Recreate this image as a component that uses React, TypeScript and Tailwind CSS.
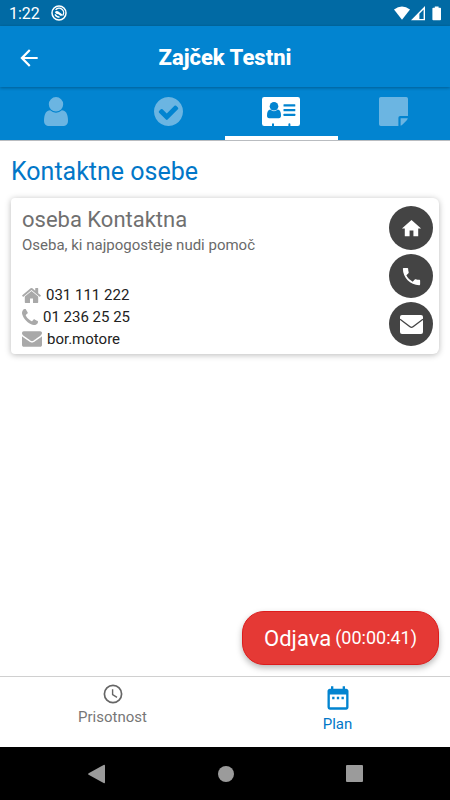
import type { ReactNode } from 'react'
import { MdArrowBack, MdDateRange, MdHome, MdPhone } from 'react-icons/md'

type IconProps = { className?: string }

function UserIcon({ className }: IconProps) {
  return (
    <svg viewBox="256 128 1280 1536" className={className} fill="currentColor" aria-hidden="true">
      <path d="M1536 1399q0 109-62.5 187t-150.5 78h-854q-88 0-150.5-78t-62.5-187q0-85 8.5-160.5t31.5-152 58.5-131 94-89 134.5-34.5q131 128 313 128t313-128q76 0 134.5 34.5t94 89 58.5 131 31.5 152 8.5 160.5zm-256-887q0 159-112.5 271.5t-271.5 112.5-271.5-112.5-112.5-271.5 112.5-271.5 271.5-112.5 271.5 112.5 112.5 271.5z" />
    </svg>
  )
}

function CheckIcon({ className }: IconProps) {
  return (
    <svg viewBox="128 128 1536 1536" className={className} fill="currentColor" aria-hidden="true">
      <path d="M1412 734q0-28-18-46l-91-90q-19-19-45-19t-45 19l-408 407-226-226q-19-19-45-19t-45 19l-91 90q-18 18-18 46 0 27 18 45l362 362q19 19 45 19 27 0 46-19l543-543q18-18 18-45zm252 162q0 209-103 385.5t-279.5 279.5-385.5 103-385.5-103-279.5-279.5-103-385.5 103-385.5 279.5-279.5 385.5-103 385.5 103 279.5 279.5 103 385.5z" />
    </svg>
  )
}

function CardIcon({ className }: IconProps) {
  return (
    <svg viewBox="0 0 38 29" className={className} aria-hidden="true">
      <path
        fill="currentColor"
        d="M2.2 0H35.8Q38 0 38 2.2V26.8Q38 29 35.8 29H28.4V27.2Q28.4 26.2 27.4 26.2T26.4 27.2V29H12V27.2Q12 26.2 11 26.2T10 27.2V29H2.2Q0 29 0 26.8V2.2Q0 0 2.2 0Z"
      />
      <g fill="#0284d0">
        <circle cx="12" cy="9.3" r="4.3" />
        <path d="M8.3 12.6Q12 15.8 15.7 12.6Q19 13.2 19 18.6Q19 21.3 16.8 21.3H7.2Q5 21.3 5 18.6Q5 13.2 8.3 12.6Z" />
        <rect x="21.5" y="7.2" width="11.8" height="2.3" rx="0.5" />
        <rect x="21.5" y="12" width="11.8" height="2.3" rx="0.5" />
        <rect x="21.5" y="16.8" width="11.8" height="2.3" rx="0.5" />
      </g>
    </svg>
  )
}

function NoteIcon({ className }: IconProps) {
  return (
    <svg viewBox="0 0 29 29" className={className} fill="currentColor" aria-hidden="true">
      <path d="M1.8 0H27.2Q29 0 29 1.8V19H21.2Q19.4 19 19.4 20.8V29H1.8Q0 29 0 27.2V1.8Q0 0 1.8 0Z" />
      <path d="M21.6 21.2H28.8Q28.6 22.4 27.8 23.2L23.6 27.6Q22.7 28.5 21.6 28.8Z" />
    </svg>
  )
}

function HouseIcon({ className }: IconProps) {
  return (
    <svg viewBox="90 250 1612 1290" className={className} fill="currentColor" aria-hidden="true">
      <path d="M1472 992v480q0 26-19 45t-45 19h-384v-384h-256v384h-384q-26 0-45-19t-19-45v-480q0-1 .5-3t.5-3l575-474 575 474q1 2 1 6zm223-69l-62 74q-8 9-21 11h-3q-13 0-21-7l-692-577-692 577q-12 8-24 7-13-2-21-11l-62-74q-8-10-7-23.5t11-21.5l719-599q32-26 76-26t76 26l244 204v-195q0-14 9-23t23-9h192q14 0 23 9t9 23v408l219 182q10 8 11 21.5t-7 23.5z" />
    </svg>
  )
}

function HandsetIcon({ className }: IconProps) {
  return (
    <svg viewBox="0 128 1408 1408" className={className} fill="currentColor" aria-hidden="true">
      <path d="M1408 1240q0 27-10 70.5t-20.5 68.5q-21 50-122 106-94 51-186 51-27 0-53-3.5t-57.5-12.5-47-14.5-55.5-20.5-49-18q-98-35-175-83-127-79-264-216t-216-264q-48-77-83-175-3-9-18-49t-20.5-55.5-14.5-47-12.5-57.5-3.5-53q0-92 51-186 56-101 106-122 25-10 68.5-20.5t70.5-10.5q14 0 21 3 18 6 53 76 11 19 30 54t35 63.5 31 53.5q3 4 17.5 25t21.5 35.5 7 28.5q0 20-28.5 50t-62 55-62 53-28.5 46q0 9 5 22.5t8.5 20.5 14 24 11.5 19q76 137 174 235t235 174q2 1 19 11.5t24 14 20.5 8.5 22.5 5q18 0 46-28.5t53-62 55-62 50-28.5q14 0 28.5 7t35.5 21.5 25 17.5q25 15 53.5 31t63.5 35 54 30q70 35 76 53 3 7 3 21z" />
    </svg>
  )
}

function EnvelopeIcon({ className }: IconProps) {
  return (
    <svg viewBox="0 256 1792 1408" className={className} fill="currentColor" aria-hidden="true">
      <path d="M1792 710v794q0 66-47 113t-113 47h-1472q-66 0-113-47t-47-113v-794q44 49 101 87 362 246 497 345 57 42 92.5 65.5t94.5 48 110 24.5h2q51 0 110-24.5t94.5-48 92.5-65.5q170-123 498-345 57-39 100-87zm0-294q0 79-49 151t-122 123q-376 261-468 325-10 7-42.5 31t-54 38.5-52 32.5-57.5 27-50 9h-2q-23 0-50-9t-57.5-27-52-32.5-54-38.5-42.5-31q-91-64-262-182.5t-205-142.5q-62-42-117-115.5t-55-136.5q0-78 41.5-130t118.5-52h1472q65 0 112.5 47t47.5 113z" />
    </svg>
  )
}

function MailIcon({ className }: IconProps) {
  return (
    <svg viewBox="0 0 23 19" className={className} aria-hidden="true">
      <rect width="23" height="19" rx="2" fill="currentColor" />
      <path d="M0 4.2L10 11.8Q11.5 12.9 13 11.8L23 4.2" fill="none" stroke="#444" strokeWidth="1.4" />
    </svg>
  )
}

function StatusBar() {
  return (
    <div className="flex h-[26px] items-center justify-between bg-[#016aa4] pl-[9px] pr-2 text-white">
      <div className="flex items-center gap-[11px]">
        <span className="pt-px text-base leading-none">1:22</span>
        <svg viewBox="0 0 16 16" className="size-4" fill="none" stroke="currentColor" aria-hidden="true">
          <circle cx="8" cy="8" r="7" strokeWidth="1.5" />
          <path d="M4.6 4.9A4.4 4.4 0 0 1 11.6 10.6" strokeWidth="1.4" />
          <path d="M3.9 7.2Q5 5.4 7 6.2L11.4 9.6L10.2 11.2L7.4 9.2Q5 9.4 3.9 7.2Z" fill="currentColor" stroke="none" />
          <path d="M4 9.4Q5.4 12.2 8.6 12.2" strokeWidth="1.3" />
        </svg>
      </div>
      <svg viewBox="0 0 48 15" className="h-[15px] w-12" fill="currentColor" aria-hidden="true">
        <path d="M0 3.6Q8 -2.6 16 3.6L8 13.8Z" />
        <path fillRule="evenodd" d="M31 0V14.2H17ZM29.6 3.4L25.4 7.7V12.9H29.6Z" />
        <path d="M40.8 0.4H44.6V1.8H46.2Q47 1.8 47 2.6V13.4Q47 14.2 46.2 14.2H39.2Q38.4 14.2 38.4 13.4V2.6Q38.4 1.8 39.2 1.8H40.8Z" />
      </svg>
    </div>
  )
}

const tabs = [
  { label: 'Oseba', icon: <UserIcon className="h-[29px] w-6" /> },
  { label: 'Opravila', icon: <CheckIcon className="size-[29px]" /> },
  { label: 'Kontakti', icon: <CardIcon className="h-[29px] w-[38px]" />, active: true },
  { label: 'Zapiski', icon: <NoteIcon className="size-[29px]" /> },
]

function Tabs() {
  return (
    <nav className="grid grid-cols-4 border-b border-[#b9bcc0] bg-[#0284d0]">
      {tabs.map((tab) => (
        <button
          key={tab.label}
          type="button"
          aria-label={tab.label}
          className={
            tab.active
              ? 'flex h-[53px] items-center justify-center border-b-4 border-white text-white'
              : 'flex h-[53px] items-center justify-center border-b-4 border-transparent text-[#6bb5e2]'
          }
        >
          {tab.icon}
        </button>
      ))}
    </nav>
  )
}

function RoundButton({ label, children }: { label: string; children: ReactNode }) {
  return (
    <button
      type="button"
      aria-label={label}
      className="flex size-11 items-center justify-center rounded-full bg-[#444] text-white"
    >
      {children}
    </button>
  )
}

function ContactCard() {
  return (
    <article className="flex justify-between rounded-sm rounded-r-md bg-white pb-1 pl-[11px] pr-[6px] pt-2 shadow-[0_1px_6px_rgba(0,0,0,0.28)]">
      <div>
        <h2 className="text-[22px] leading-7 text-[#707070]">oseba Kontaktna</h2>
        <p className="text-[15px] leading-[22px] text-[#6a6a6a]">Oseba, ki najpogosteje nudi pomoč</p>
        <ul className="mt-7 text-[15px] leading-[22px] text-[#222]">
          <li className="flex items-center gap-[5px]">
            <HouseIcon className="h-[15px] w-[19px] text-[#a9a9a9]" />
            031 111 222
          </li>
          <li className="flex items-center gap-[5px]">
            <HandsetIcon className="size-4 text-[#a9a9a9]" />
            01 236 25 25
          </li>
          <li className="flex items-center gap-[5px]">
            <EnvelopeIcon className="h-4 w-5 text-[#a9a9a9]" />
            bor.motore
          </li>
        </ul>
      </div>
      <div className="flex flex-col gap-1">
        <RoundButton label="Domov">
          <MdHome className="size-[23px]" />
        </RoundButton>
        <RoundButton label="Pokliči">
          <MdPhone className="size-[23px]" />
        </RoundButton>
        <RoundButton label="Pošlji e-pošto">
          <MailIcon className="h-[19px] w-[23px]" />
        </RoundButton>
      </div>
    </article>
  )
}

function BottomNav() {
  return (
    <nav className="grid h-[71px] grid-cols-2 border-t border-[#d0d0d0]">
      <button type="button" className="flex flex-col items-center pt-[7px] text-[15px] leading-5 text-[#777]">
        <svg viewBox="0 0 20 20" className="mb-[3px] size-5 text-[#666]" fill="none" stroke="currentColor" aria-hidden="true">
          <circle cx="10" cy="10" r="8.6" strokeWidth="1.7" />
          <path d="M9.6 5.2V10.6L14 13.4" strokeWidth="1.4" />
        </svg>
        Prisotnost
      </button>
      <button type="button" className="flex flex-col items-center pt-[7px] text-[15px] leading-5 text-[#0277c8]">
        <MdDateRange className="mb-[2px] size-7 text-[#0284d0]" />
        Plan
      </button>
    </nav>
  )
}

function SystemNav() {
  return (
    <div className="flex h-[53px] items-center justify-center gap-28 bg-black text-[#9b9b9b]">
      <button type="button" aria-label="Nazaj">
        <svg viewBox="0 0 18 20" className="h-5 w-[18px]" fill="currentColor" aria-hidden="true">
          <path d="M0.6 9.2L15.6 1Q17 0.4 17 1.8V18.2Q17 19.6 15.6 19L0.6 10.8Q-0.4 10 0.6 9.2Z" />
        </svg>
      </button>
      <button type="button" aria-label="Začetni zaslon" className="size-4 rounded-full bg-current" />
      <button type="button" aria-label="Pregled" className="size-[17px] rounded-[1px] bg-current" />
    </div>
  )
}

export default function App() {
  return (
    <div className="flex min-h-screen flex-col bg-white font-[Roboto,sans-serif]">
      <StatusBar />
      <header className="relative grid h-[61px] grid-cols-[36px_1fr_36px] items-center bg-[#0284d0] px-4 pt-[2px] text-white shadow-[0_1px_3px_rgba(0,0,0,0.3)]">
        <button type="button" aria-label="Nazaj">
          <MdArrowBack className="size-[26px]" />
        </button>
        <h1 className="text-center text-[22px] font-extrabold">Zajček Testni</h1>
      </header>
      <Tabs />
      <main className="flex flex-1 flex-col px-[11px] pb-[11px]">
        <h2 className="mb-[10px] mt-[15px] text-[25px] leading-8 text-[#0277c8]">Kontaktne osebe</h2>
        <ContactCard />
        <button
          type="button"
          className="mt-auto flex h-[54px] items-center gap-1 self-end rounded-[22px] border border-[#dd1c1c] bg-[#e53935] px-[21px] text-[22px] text-white shadow-[0_3px_6px_rgba(0,0,0,0.28)]"
        >
          Odjava <span className="text-lg">(00:00:41)</span>
        </button>
      </main>
      <BottomNav />
      <SystemNav />
    </div>
  )
}
